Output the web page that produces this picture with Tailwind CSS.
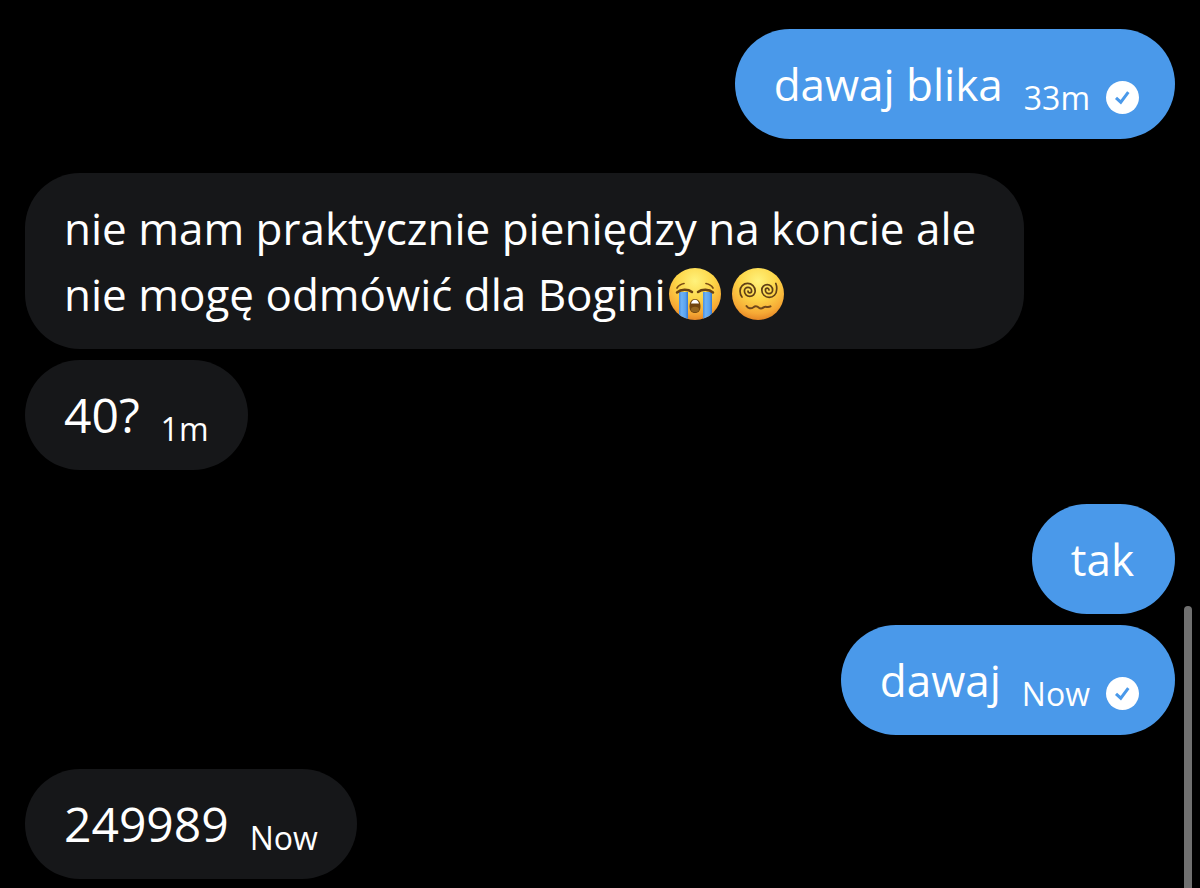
<!DOCTYPE html>
<html lang="pl">
<head>
    <meta charset="UTF-8">
    <meta name="viewport" content="width=device-width, initial-scale=1.0">
    <title>Messages</title>
    <script src="https://cdn.jsdelivr.net/npm/@tailwindcss/browser@4"></script>
</head>
<body class="bg-black text-white font-['Open_Sans',sans-serif]">

    <!-- Shared icon shapes -->
    <svg class="absolute size-0">
        <defs>
            <radialGradient id="face" cx="0.5" cy="0.25" r="0.78">
                <stop offset="0" stop-color="#fff27c" />
                <stop offset="0.45" stop-color="#fdd648" />
                <stop offset="0.8" stop-color="#f6a935" />
                <stop offset="1" stop-color="#e17f22" />
            </radialGradient>
            <linearGradient id="tear" x1="0" y1="0" x2="1" y2="0">
                <stop offset="0" stop-color="#4a8fdf" />
                <stop offset="0.3" stop-color="#6db2f6" />
                <stop offset="0.7" stop-color="#5ba4f0" />
                <stop offset="1" stop-color="#3577cf" />
            </linearGradient>
            <clipPath id="head"><circle cx="26" cy="26" r="26" /></clipPath>
        </defs>
        <symbol id="sent" viewBox="0 0 33 33">
            <circle cx="16.500" cy="16.500" r="16.500" fill="#fff" />
            <path d="M10 16.800l4.800 4.400 7.500-10" fill="none" stroke="#4a99ea" stroke-width="3" />
        </symbol>
    </svg>

    <main class="relative min-h-screen overflow-hidden px-[25px] pt-[29px] pb-[9px] flex flex-col gap-[34px] text-[44px] leading-[66px]">

        <!-- Sent -->
        <div class="flex flex-col items-end gap-[11px]">
            <div class="flex items-end bg-[#4a99ea] rounded-[55px] py-[22px] pl-[39px] pr-[36px]">
                <p>dawaj blika</p>
                <time class="ml-[21px] text-[32px] leading-[38px]">33m</time>
                <svg class="ml-4 mb-[3px] size-[33px]" role="img" aria-label="Sent"><use href="#sent" /></svg>
            </div>
        </div>

        <!-- Received -->
        <div class="flex flex-col items-start gap-[11px]">
            <div class="bg-[#161719] rounded-[55px] py-[22px] pl-[39px] pr-[48px]">
                <p>nie mam praktycznie pieniędzy na koncie ale<br>nie mogę odmówić dla Bogini<svg class="inline-block align-[-9px] ml-[3px] size-[52px]" viewBox="0 0 52 52" role="img" aria-label="Crying face" fill="none">
                        <circle cx="26" cy="26" r="26" fill="url(#face)" />
                        <g clip-path="url(#head)">
                            <path d="M10 24h9v30h-9z" fill="url(#tear)" />
                            <path d="M34 24h9v30h-9z" fill="url(#tear)" />
                        </g>
                        <path d="M8 24.500c4-3.500 11-3.500 15-.5M29 24c4-3 11-3 15 .5" stroke="#6b4312" stroke-width="2.500" stroke-linecap="round" />
                        <path d="M8 20c1.500-2.500 4-4 7-4.500M44 20c-1.500-2.500-4-4-7-4.500" stroke="#7a4c14" stroke-width="1.700" stroke-linecap="round" />
                        <path d="M20.500 38.500c0-4.500 2-7.500 5.500-7.500s5.500 3 5.500 7.500-2.300 6.500-5.500 6.500-5.500-2-5.500-6.500z" fill="#70440f" />
                        <path d="M22 35.500c.6-2.500 2-3.800 4-3.800s3.400 1.300 4 3.800z" fill="#fff" />
                        <ellipse cx="26" cy="41.500" rx="4" ry="2.800" fill="#94651f" />
                    </svg><svg class="inline-block align-[-9px] ml-[11px] size-[52px]" viewBox="0 0 52 52" role="img" aria-label="Dizzy face" fill="none">
                        <circle cx="26" cy="26" r="26" fill="url(#face)" />
                        <g stroke="#5f3f16" stroke-width="1.700" stroke-linecap="round">
                            <path d="M16 23a1.800 1.800 0 0 0 3.600 0a3.600 3.600 0 0 0-7.200 0a5.400 5.400 0 0 0 10.800 0a7.600 7.600 0 0 0-15.200 0q0 3.500 2 6" />
                            <path d="M37 22a1.800 1.800 0 0 0-3.600 0a3.600 3.600 0 0 0 7.200 0a5.400 5.400 0 0 0-10.800 0a7.400 7.400 0 0 0 14.800 0q.5-3.500-.8-6.500" />
                        </g>
                        <path d="M14.500 38c1.500 2.500 4.500 3 7 1.200 2-1.600 4-.8 5.500.6 1.500 1.200 3 .8 4.500-.4 2.500-1.600 4 .6 7-1" stroke="#71471a" stroke-width="2" stroke-linecap="round" />
                    </svg></p>
            </div>
            <div class="flex items-end bg-[#161719] rounded-[55px] py-[22px] pl-[39px] pr-[39px]">
                <p class="text-[48px]">40?</p>
                <time class="ml-[21px] text-[32px] leading-[38px]">1m</time>
            </div>
        </div>

        <!-- Sent -->
        <div class="flex flex-col items-end gap-[11px]">
            <div class="bg-[#4a99ea] rounded-[55px] py-[22px] pl-[39px] pr-[41px]">
                <p>tak</p>
            </div>
            <div class="flex items-end bg-[#4a99ea] rounded-[55px] py-[22px] pl-[39px] pr-[36px]">
                <p>dawaj</p>
                <time class="ml-[21px] text-[32px] leading-[38px]">Now</time>
                <svg class="ml-4 mb-[3px] size-[33px]" role="img" aria-label="Sent"><use href="#sent" /></svg>
            </div>
        </div>

        <!-- Received -->
        <div class="flex flex-col items-start">
            <div class="flex items-end bg-[#161719] rounded-[55px] py-[22px] pl-[39px] pr-[39px]">
                <p class="text-[48px]">249989</p>
                <time class="ml-[21px] text-[32px] leading-[38px]">Now</time>
            </div>
        </div>

        <!-- Scroll indicator -->
        <div class="absolute right-2 top-[606px] bottom-0 w-2 rounded-t-full bg-[#707070]"></div>
    </main>

</body>
</html>
